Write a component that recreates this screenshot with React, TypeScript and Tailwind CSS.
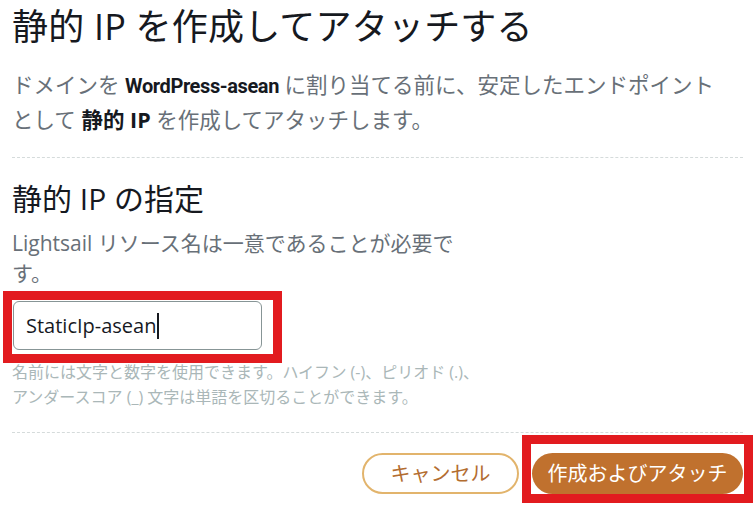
import React from "react";

const font = {
  fontFamily: '"Open Sans", "Noto Sans CJK JP", sans-serif',
};

export default function App() {
  return (
    <div className="w-[756px] h-[506px] bg-white overflow-hidden pt-[4px]" style={font}>
      <div className="px-3">
        <h1 className="text-[36px] leading-[46px] text-[#16191f] tracking-[0.2px]">
          静的 IP を作成してアタッチする
        </h1>
        <p className="mt-[18px] w-[716px] text-[21.5px] leading-[33px] text-[#687078]">
          ドメインを{" "}
          <b
            className="font-bold text-[20px] tracking-[-0.4px] text-[#16191f]"
            style={{ fontFamily: 'Roboto, "Noto Sans CJK JP", sans-serif' }}
          >
            WordPress-asean
          </b>{" "}
          に割り当てる前に、安定したエンドポイントとして <b className="font-bold text-[#16191f]">静的 IP</b>{" "}
          を作成してアタッチします。
        </p>
        <div className="mt-[21px] mr-[1px] border-t border-dashed border-[#d5dbdb]" />

        <h2 className="mt-[22px] text-[30px] leading-[38px] text-[#16191f]">静的 IP の指定</h2>
        <p className="mt-[10px] w-[458px] text-[21px] leading-[30px] text-[#687078]">
          Lightsail リソース名は一意であることが必要です。
        </p>
      </div>

      <div className="ml-[3px] mt-[3px] w-[279px] border-[9px] border-[#e21b1f] pl-[1px] pt-[1px] pb-[4px]">
        <div className="w-[249px] h-[49px] rounded-[6px] border border-[#879596] flex items-center pl-[12px] text-[20px] text-[#16191f]">
          StaticIp-asean
          <span className="ml-[1px] inline-block w-[1.5px] h-[26px] bg-[#16191f]" />
        </div>
      </div>

      <div className="px-3">
        <p className="-mt-[3px] w-[482px] text-[16px] leading-[25px] text-[#aab7b8]">
          名前には文字と数字を使用できます。ハイフン (-)、ピリオド (.)、アンダースコア (_) 文字は単語を区切ることができます。
        </p>
        <div className="mt-[22px] mr-[1px] border-t border-dashed border-[#d5dbdb]" />
      </div>

      <div className="mt-[2px] flex justify-end items-end pr-[3px]">
        <button className="mb-[9px] mr-[3px] w-[157px] h-[41px] rounded-full border-2 border-[#e2b46c] text-[20px] text-[#b36d30]">
          キャンセル
        </button>
        <div className="border-[9px] border-[#e21b1f] pl-[1px] pt-[9px] pr-[1px] w-[231px]">
          <button className="w-[211px] h-[41px] rounded-full bg-[#c0712e] text-white text-[20px]">
            作成およびアタッチ
          </button>
        </div>
      </div>
    </div>
  );
}
